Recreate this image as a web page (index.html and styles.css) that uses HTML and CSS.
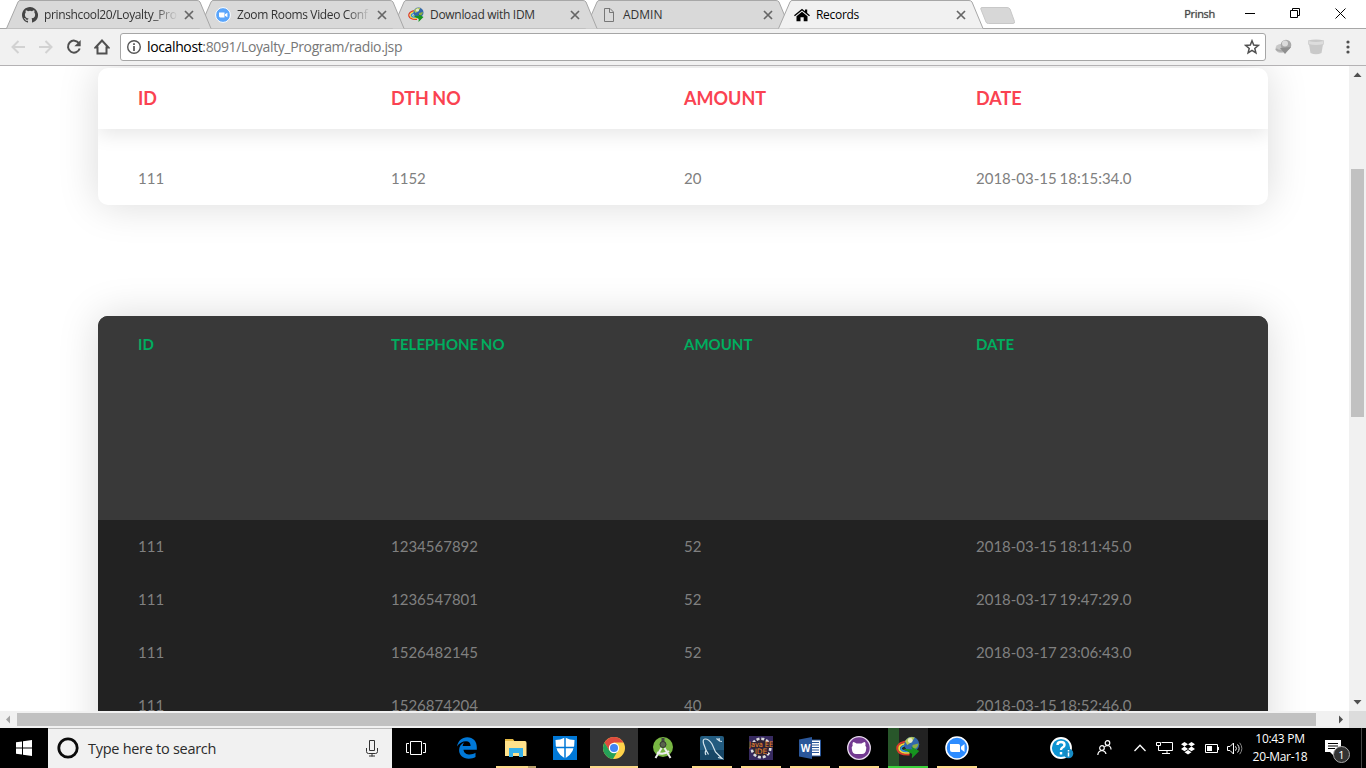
FILE: index.html
```
<!DOCTYPE html>
<html lang="en">
<head>
<meta charset="utf-8">
<title>Records</title>
<link rel="stylesheet" href="styles.css">
</head>
<body>
<div class="screen">
  <header class="tabstrip">
    <div class="tab z4">
      <svg class="shape" width="206" height="29"><path d="M.5 28.500 12 2Q12.800 .5 14 .5H191Q193 .5 194 2L205 28.500"/></svg>
      <svg class="fav" viewBox="0 0 16 16"><path fill="#444" d="M8 0C3.580 0 0 3.580 0 8c0 3.540 2.290 6.530 5.470 7.590.4.070.55-.17.55-.38v-1.490c-2.010.37-2.530-.49-2.690-.94-.09-.23-.48-.94-.82-1.130-.28-.15-.68-.52-.01-.53.63-.01 1.080.58 1.230.82.720 1.210 1.870.87 2.330.66.070-.52.280-.87.510-1.070-1.780-.2-3.640-.89-3.640-3.950 0-.87.310-1.590.82-2.150-.08-.2-.36-1.020.08-2.120 0 0 .67-.21 2.200.82a7.600 7.600 0 0 1 4 0c1.530-1.040 2.200-.82 2.200-.82.440 1.100.160 1.920.080 2.120.510.560.820 1.270.820 2.150 0 3.070-1.870 3.750-3.650 3.950.290.250.540.730.540 1.480v2.200c0 .210.150.460.550.380A8 8 0 0 0 8 0Z"/></svg>
      <span class="title fade">prinshcool20/Loyalty_Pro</span>
      <svg class="close" viewBox="0 0 10 10"><path d="M1 1l8 8M9 1L1 9"/></svg>
    </div>
    <div class="tab z3">
      <svg class="shape" width="206" height="29"><path d="M.5 28.500 12 2Q12.800 .5 14 .5H191Q193 .5 194 2L205 28.500"/></svg>
      <svg class="fav" viewBox="0 0 16 16"><circle cx="8" cy="8" r="7.400" fill="#5aa5fb" stroke="#fff"/><path fill="#fff" d="M4 5.500h5.500v5H5L4 9.500zM10 7.300l2.400-1.500v4.500L10 8.800z"/></svg>
      <span class="title fade">Zoom Rooms Video Conf</span>
      <svg class="close" viewBox="0 0 10 10"><path d="M1 1l8 8M9 1L1 9"/></svg>
    </div>
    <div class="tab z2">
      <svg class="shape" width="206" height="29"><path d="M.5 28.500 12 2Q12.800 .5 14 .5H191Q193 .5 194 2L205 28.500"/></svg>
      <svg class="fav" viewBox="0 0 16 16"><use href="#idm"/></svg>
      <span class="title">Download with IDM</span>
      <svg class="close" viewBox="0 0 10 10"><path d="M1 1l8 8M9 1L1 9"/></svg>
    </div>
    <div class="tab z1">
      <svg class="shape" width="206" height="29"><path d="M.5 28.500 12 2Q12.800 .5 14 .5H191Q193 .5 194 2L205 28.500"/></svg>
      <svg class="fav" viewBox="0 0 16 16"><path d="M3.500 1.500H9L12.500 5v9.500h-9zM8.500 1.500v4h4" fill="none" stroke="#777"/></svg>
      <span class="title plain">ADMIN</span>
      <svg class="close" viewBox="0 0 10 10"><path d="M1 1l8 8M9 1L1 9"/></svg>
    </div>
    <div class="tab active">
      <svg class="shape" width="206" height="29"><path d="M.5 28.500 12 2Q12.800 .5 14 .5H191Q193 .5 194 2L205 28.500"/></svg>
      <svg class="fav" viewBox="0 0 16 16"><path d="M0 8.300 8 1.700l3 2.500V2.500h2.200v3.400L16 8.300l-.9 1L8 3.500.9 9.300zM2.500 9.300 8 4.800l5.500 4.500v5H9.700v-4H6.500v4h-4z"/></svg>
      <span class="title">Records</span>
      <svg class="close" viewBox="0 0 10 10"><path d="M1 1l8 8M9 1L1 9"/></svg>
    </div>
    <svg class="newtab" width="36" height="18" viewBox="0 0 36 18"><path d="M2 .5H27Q29 .5 30 2L34.500 14.500Q35 16.500 33 16.500H8.500Q6.500 16.500 6 15L.8 2Q.5 .5 2 .5z" fill="#d7d7d7" stroke="#c8c8c8"/></svg>
    <div class="window-controls">
      <span class="user">Prinsh</span>
      <svg width="10" height="10"><path d="M0 5.500h10" stroke="#000"/></svg>
      <svg width="10" height="10"><path d="M.5 2.500h7v7h-7zM2.500 2.500v-2h7v7h-2" fill="none" stroke="#000"/></svg>
      <svg width="11" height="11"><path d="M.5.5l10 10M10.500.5l-10 10" stroke="#000"/></svg>
    </div>
  </header>

  <div class="toolbar">
    <svg class="nav" viewBox="0 0 16 16"><path d="M15 8H3M8.500 2 2.500 8l6 6" stroke="#d2d2d2" stroke-width="2" fill="none"/></svg>
    <svg class="nav" viewBox="0 0 16 16"><path d="M1 8h12M7.500 2l6 6-6 6" stroke="#d2d2d2" stroke-width="2" fill="none"/></svg>
    <svg class="nav" viewBox="0 0 16 16"><path d="M13 4.300A6 6 0 1 0 13.700 9.500" stroke="#505050" stroke-width="2" fill="none"/><path d="M14.700 1v6.300H8.400z" fill="#505050"/></svg>
    <svg class="nav" viewBox="0 0 16 16"><path d="M1.500 8.500 8 1.500l6.500 7H12.500v6h-9v-6z" stroke="#505050" stroke-width="2" fill="none"/></svg>
    <div class="omnibox">
      <svg width="16" height="16" viewBox="0 0 16 16"><circle cx="8" cy="8" r="6.300" fill="none" stroke="#555" stroke-width="1.400"/><path d="M8 4.200v1.700M8 7v5" stroke="#555" stroke-width="1.700"/></svg>
      <span class="url"><b>localhost</b>:8091/Loyalty_Program/radio.jsp</span>
      <svg class="star" width="16" height="16" viewBox="0 0 16 16"><path d="M8 1.800l1.700 4.300 4.600.3-3.500 3 1.100 4.400L8 11.400l-3.900 2.400 1.100-4.400-3.500-3 4.600-.3z" fill="none" stroke="#505050" stroke-width="1.500"/></svg>
    </div>
    <svg class="ext1" width="18" height="16" viewBox="0 0 18 16"><ellipse cx="6" cy="9.500" rx="5.500" ry="4.500" fill="#c8c8c8"/><path d="M1 10q3 3 8 1" stroke="#aaa" stroke-width="2" fill="none"/><circle cx="11" cy="6" r="5.300" fill="#a9a9a9"/><circle cx="10" cy="4.500" r="3" fill="#dcdcdc"/><path d="M5 9l11-1-6 7z" fill="#8f8f8f"/></svg>
    <svg class="ext2" width="16" height="16" viewBox="0 0 16 16"><path d="M0 1.500q8-2 16 0v4h-1L13.500 14Q8 16.500 2.500 14L1 5.500H0z" fill="#c9c9c9"/><path d="M.5 2q7.500 2 15 0v3q-7.500 2-15 0z" fill="#ddd"/></svg>
    <svg class="dots" width="4" height="14"><g fill="#505050"><circle cx="2" cy="2" r="1.600"/><circle cx="2" cy="7" r="1.600"/><circle cx="2" cy="12" r="1.600"/></g></svg>
  </div>

  <div class="viewport">
    <main class="page">
      <section class="table light">
        <div class="row head"><span>ID</span><span>DTH NO</span><span>AMOUNT</span><span>DATE</span></div>
        <div class="body">
          <div class="row"><span>111</span><span>1152</span><span>20</span><span>2018-03-15 18:15:34.0</span></div>
        </div>
      </section>
      <section class="table dark">
        <div class="row head"><span>ID</span><span>TELEPHONE NO</span><span>AMOUNT</span><span>DATE</span></div>
        <div class="body">
          <div class="row"><span>111</span><span>1234567892</span><span>52</span><span>2018-03-15 18:11:45.0</span></div>
          <div class="row"><span>111</span><span>1236547801</span><span>52</span><span>2018-03-17 19:47:29.0</span></div>
          <div class="row"><span>111</span><span>1526482145</span><span>52</span><span>2018-03-17 23:06:43.0</span></div>
          <div class="row"><span>111</span><span>1526874204</span><span>40</span><span>2018-03-15 18:52:46.0</span></div>
        </div>
      </section>
    </main>
    <div class="vscroll">
      <svg width="17" height="17"><path d="M4.500 11 8.500 6.500 12.500 11z" fill="#505050"/></svg>
      <div class="vthumb"></div>
      <svg class="down" width="17" height="17"><path d="M4.500 6 8.500 10.500 12.500 6z" fill="#505050"/></svg>
    </div>
  </div>
  <div class="hscroll">
    <svg width="17" height="17"><path d="M10 4.500 6 8.500 10 12.500z" fill="#a3a3a3"/></svg>
    <div class="hthumb"></div>
    <svg class="right" width="17" height="17"><path d="M7 4.500 11 8.500 7 12.500z" fill="#505050"/></svg>
    <div class="corner"></div>
  </div>

  <footer class="taskbar">
    <div class="start"><svg width="16" height="16" viewBox="0 0 16 16"><path fill="#fff" d="M0 2.300 6 1.400v6.100H0zM7 1.200 16 0v7.500H7zM0 8.500h6v6.100l-6-.9zM7 8.500h9V16l-9-1.200z"/></svg></div>
    <div class="search">
      <svg width="22" height="22" viewBox="0 0 22 22"><circle cx="11" cy="11" r="9.200" fill="none" stroke="#0b0b0b" stroke-width="2.800"/></svg>
      <span>Type here to search</span>
      <svg class="mic" width="12" height="17" viewBox="0 0 12 17"><path d="M3.500.5h5v10h-5zM.5 8v3.500q0 2 2 2h7q2 0 2-2V8M6 13.500v3M3 16h6" fill="none" stroke="#333"/></svg>
    </div>
    <div class="apps">
      <div class="app taskview"><svg width="20" height="14" viewBox="0 0 20 14"><path d="M4.500.5h11v13h-11zM3 2.500H.5v9H3M17 2.500h2.500v9H17" fill="none" stroke="#fff"/></svg></div>
      <div class="app"><svg width="22" height="22" viewBox="0 0 22 22"><path fill="#0078d7" d="M1 9.500C2 4 6 .3 11.200.3c6 0 9.600 4.200 9.600 10v2.400H7.500c.2 3.200 3 4.800 6.200 4.800 2.200 0 4.200-.7 5.800-1.700v4.300c-1.800 1-4 1.600-6.700 1.600-6 0-9.700-3.300-9.700-8.600 0-3.500 1.900-6.300 5.200-7.900-1 1.100-1.500 2.300-1.700 3.700h8c0-2.800-1.600-4.600-4.500-4.600C6.500 4.300 3 6.300 1 9.500z"/></svg></div>
      <div class="app open double"><svg width="22" height="20" viewBox="0 0 22 20"><path fill="#e5b944" d="M0 1h8l2 3H0z"/><path fill="#ffe28b" d="M0 3h20q1.500 0 1.500 2v13H0z"/><path fill="#35b1ea" d="M4 10h14v9h-4v-4H8v4H4z"/></svg></div>
      <div class="app"><svg width="24" height="24" viewBox="0 0 24 24"><path fill="#0078d7" d="M0 0h24v24H0z"/><path fill="#fff" d="M12 1.500Q7 4 2.500 4q-.7 13 9.500 18.500Q22.200 17 21.500 4 17 4 12 1.500z"/><path d="M12 1v22M2 11.500h20" stroke="#0078d7" stroke-width="1.500"/></svg></div>
      <div class="app open chrome"><svg width="24" height="24" viewBox="0 0 24 24"><circle cx="12" cy="12" r="11" fill="#ffd24a"/><path fill="#de4b3e" d="M2.500 6.500A11 11 0 0 1 21.500 6.500H12l-5.500 7z"/><path fill="#25a058" d="M2.500 6.500A11 11 0 0 0 11 23l5-8.500-5 2-4-2.500z"/><circle cx="12" cy="12" r="5.200" fill="#fff"/><circle cx="12" cy="12" r="4" fill="#4285f4"/></svg></div>
      <div class="app"><svg width="22" height="24" viewBox="0 0 22 24"><circle cx="11" cy="11" r="10" fill="#78b643"/><path d="M11 2v5" stroke="#444" stroke-width="3"/><circle cx="11" cy="8.500" r="3" fill="#59634d" stroke="#333"/><path d="M9.500 12 3.500 22M12.500 12l6 10M5 16.500q6.500 3 12-1.500" stroke="#eee" stroke-width="2" fill="none"/></svg></div>
      <div class="app open"><svg width="24" height="24" viewBox="0 0 24 24"><rect width="24" height="24" rx="2" fill="#235c80"/><path d="M0 14h24v10H0z" fill="#174666"/><path d="M6 19q-1.500-2 0-5L3.500 7.500Q2.500 3 5 3q4 0 7 5l3.500 8 6.500 6.500-4-1M6 14l2.500 4.500M16.500 2.500l3 2.500 2.500.5M19.500 5l-.5-3" fill="none" stroke="#d5e5ee" stroke-width="1.200"/></svg></div>
      <div class="app open"><svg width="24" height="24" viewBox="0 0 24 24"><path fill="#372a60" d="M0 0h24v24H0z"/><circle cx="12" cy="12" r="9.300" fill="#302438" stroke="#ddd" stroke-width="2.600" stroke-dasharray="3 1.870"/><path d="M0 6h24v6h-5v6H6v-6H0z" fill="#2d2235"/><text x="0" y="11" class="eclipse" textLength="24" lengthAdjust="spacingAndGlyphs">Java EE</text><text x="12" y="18" text-anchor="middle" class="eclipse">IDE</text></svg></div>
      <div class="app open"><svg width="22" height="22" viewBox="0 0 22 22"><path d="M10 3h11.500v16H10z" fill="#fff" stroke="#2b579a"/><path d="M12 5.500h8M12 8h8M12 10.500h8M12 13h8M12 15.500h8" stroke="#2b579a"/><path fill="#2b579a" d="M0 2.500 13 0v22L0 19.500z"/><text x="6.500" y="15" text-anchor="middle" class="word">W</text></svg></div>
      <div class="app open"><svg width="24" height="24" viewBox="0 0 24 24"><circle cx="12" cy="12" r="11.300" fill="#733a91" stroke="#e9dcef" stroke-width="1.300"/><path fill="#fff" d="M6 6q2 0 3.500 1.500h5Q16 6 18 6q1 2 .3 3.500Q20 11 19 14q-.5 4-4 4H9q-3.500 0-4-4-1-3 .7-4.500Q5 8 6 6z"/></svg></div>
      <div class="app open idmapp"><svg width="24" height="24" viewBox="0 0 16 16"><g id="idm"><path d="M8 3.500Q-.3 4.500 1 9.300q1.200 3.400 8 3" fill="none" stroke="#dd3b2b" stroke-width="1.300"/><path d="M8 4.700Q1.300 5.500 2.200 9q1.200 2.500 6.800 2.300" fill="none" stroke="#f2d73c" stroke-width="1.200"/><path d="M8 5.900Q2.900 6.500 3.400 8.800 4.500 10.500 9 10.200" fill="none" stroke="#2b8fd3" stroke-width="1.200"/><circle cx="10.500" cy="5.500" r="5" fill="#3267ad"/><path d="M6 3.500Q8.500-.3 12.500 1l-2 3-3 2z" fill="#b5c852"/><path d="M11 6l4-1q-.5 3.500-4 4z" fill="#8cad45"/><circle cx="9.500" cy="3" r="1.600" fill="#f2f5e9" opacity=".8"/><path d="M4.500 8.500 11 9l-1-2 5.500 3-5 5 .3-3z" fill="#16941f"/></g></svg></div>
      <div class="app open"><svg width="24" height="24" viewBox="0 0 24 24"><circle cx="12" cy="12" r="11" fill="#2d8cff" stroke="#fff" stroke-width="1.500"/><path fill="#fff" d="M5 8h8.500q1.500 0 1.500 1.500V16H7q-2 0-2-2zM16 10.800 19.500 8v8L16 13.300z"/></svg></div>
    </div>
    <div class="tray">
      <svg class="help" width="24" height="22" viewBox="0 0 24 22"><circle cx="11" cy="11" r="10" fill="#0d94d2" stroke="#fff" stroke-width="1.800"/><path d="M7.500 8Q7.500 5 11 5t3.500 3Q14.500 9.500 12.500 10.500 11 11.300 11 13M11 15v2.500" fill="none" stroke="#fff" stroke-width="2.400"/><circle cx="18.500" cy="16.500" r="4.800" fill="#168bc4"/><path d="M18.500 13v1.500M18.500 15.500v4" stroke="#fff" stroke-width="1.500"/></svg>
      <svg class="people" width="15" height="16" viewBox="0 0 15 16"><g fill="none" stroke="#fff" stroke-width="1.200"><circle cx="5" cy="8" r="2.300"/><path d="M.8 15q.2-4 4.200-4.500Q8.500 11 9 14"/><circle cx="10.500" cy="3" r="2.300"/><path d="M7.500 7Q8.500 5.500 10.500 5.500q3.500.5 3.500 4"/></g></svg>
      <svg class="chev" width="12" height="8" viewBox="0 0 12 8"><path d="M.5 7 6 1.300 11.500 7" fill="none" stroke="#fff" stroke-width="1.300"/></svg>
      <svg class="net" width="17" height="14" viewBox="0 0 17 14"><path d="M5.500 1.500h11v8h-11M2.500 6v3.500H6M11 9.500v3M6 12.500h8M.5 1.500h4v3h-4zM2.500 4v3" fill="none" stroke="#fff"/></svg>
      <svg class="drop" width="14" height="13" viewBox="0 0 14 13"><path fill="#fff" d="M0 2.300 3.500 0 7 2.300 3.500 4.600zM7 2.300 10.500 0 14 2.300l-3.500 2.300zM0 6.900l3.500-2.300L7 6.900 3.500 9.200zM7 6.900l3.500-2.300L14 6.900l-3.500 2.300zM3.500 10.200 7 8l3.500 2.200L7 12.500z"/></svg>
      <svg class="bat" width="15" height="9"><path d="M.5.500h12v8H.5zM13.500 3v3" fill="none" stroke="#fff"/><path d="M2 2h5v5H2z" fill="#fff"/></svg>
      <svg class="vol" width="16" height="13" viewBox="0 0 16 13"><path d="M.5 4.500H3L6.500 1v11L3 8.500H.5zM8.500 4.300q1.800 2.200 0 4.400M10.500 2.500q3.300 4 0 8" fill="none" stroke="#fff"/><path d="M12.700.8q4.300 5.700 0 11.400" fill="none" stroke="#888"/></svg>
      <div class="clock"><span>10:43 PM</span><span class="date">20-Mar-18</span></div>
      <div class="notice"><svg width="16" height="16" viewBox="0 0 16 16"><path fill="#fff" d="M0 0h16v12H9v4l-4-4H0z"/><path d="M3 3.500h10M3 6h10M3 8.500h7" stroke="#000"/></svg><span class="badge">1</span></div>
    </div>
  </footer>
</div>
</body>
</html>
```
FILE: styles.css
```
* { box-sizing: border-box; }
body { margin: 0; overflow: hidden; background: #fff; font-family: "Open Sans", "Noto Sans", sans-serif; }
svg { display: block; flex: none; }
.screen { display: flex; flex-direction: column; width: 1366px; height: 768px; overflow: hidden; }

.tabstrip { display: flex; flex: none; height: 29px; padding-left: 6px; border-bottom: 1px solid #a7a7a7; }
.tab { position: relative; display: flex; align-items: center; flex: none; width: 193px; height: 29px; padding-left: 16px; }
.z4 { z-index: 4; } .z3 { z-index: 3; } .z2 { z-index: 2; } .z1 { z-index: 1; }
.active { z-index: 5; }
.shape { position: absolute; left: 0; top: 0; z-index: -1; fill: #d9d9d9; stroke: #a7a7a7; overflow: visible; }
.active .shape { fill: #f1f1f1; }
.fav { width: 16px; height: 16px; }
.title { width: 134px; margin-left: 6px; font-size: 12px; line-height: 16px; letter-spacing: -.3px; white-space: nowrap; color: #333; }
.plain { letter-spacing: 0; }
.active .title { color: #000; }
.fade { letter-spacing: -.36px; -webkit-mask-image: linear-gradient(90deg, #000 82%, transparent); mask-image: linear-gradient(90deg, #000 82%, transparent); }
.close { width: 10px; height: 10px; margin-left: 6px; fill: none; stroke: #666; stroke-width: 1.7; }
.newtab { margin: 7px 0 0 9px; }
.window-controls { display: flex; align-items: center; gap: 35px; height: 26px; margin: 0 20px 0 auto; }
.user { margin-right: -5px; font-size: 11px; letter-spacing: -.3px; color: #444; text-shadow: 0 0 1px #777; }

.toolbar { display: flex; align-items: center; flex: none; height: 37px; padding: 0 16px 0 10px; background: #f1f1f1; border-bottom: 1px solid #b4b2b4; }
.nav { width: 16px; height: 16px; margin-right: 12px; }
.nav + .nav + .nav + .nav { margin-right: 10px; }
.omnibox { display: flex; align-items: center; width: 1146px; height: 28px; padding: 0 5px; border: 1px solid #a6a6a6; border-radius: 3px; background: #fff; }
.url { margin-left: 5px; font-size: 14px; line-height: 20px; color: #777; letter-spacing: -.37px; }
.url b { font-weight: 400; color: #000; }
.star { margin-left: auto; }
.ext1 { margin-left: 9px; }
.ext2 { margin-left: 15px; }
.dots { margin-left: auto; }

.viewport { display: flex; flex: none; height: 645px; overflow: hidden; }
.page { width: 1349px; padding: 2px 81px 0 98px; background: #fff; overflow: hidden; }
.table { width: 1170px; border-radius: 10px; overflow: hidden; box-shadow: 0 0 40px rgba(0, 0, 0, .15); font-family: Lato, sans-serif; }
.row { display: grid; grid-template-columns: 253px 293px 292px 292px; padding-left: 40px; }
.light { height: 137px; background: #fff; }
.light .head { height: 61px; padding-top: 18px; font-size: 18px; line-height: 25px; font-weight: 700; word-spacing: -1px; color: #fa4251; box-shadow: 0 5px 20px rgba(0, 0, 0, .1); }
.light .body { padding-top: 23px; }
.body .row { height: 53px; padding-top: 16px; font-size: 15px; line-height: 21px; word-spacing: -1px; color: #808080; }
.dark { height: 700px; margin-top: 111px; background: #222; }
.dark .head { height: 204px; padding-top: 18px; font-size: 15px; line-height: 21px; font-weight: 700; word-spacing: -1px; color: #00ad5f; background: #393939; }
.vscroll { width: 17px; height: 645px; background: #f1f1f1; display: flex; flex-direction: column; }
.vthumb { width: 13px; height: 248px; margin: 86px 0 0 2px; background: #c1c1c1; }
.down { margin-top: auto; }
.hscroll { display: flex; flex: none; height: 17px; background: #f1f1f1; }
.hthumb { width: 1299px; height: 13px; margin-top: 2px; background: #c1c1c1; }
.right { margin-left: auto; }
.corner { width: 17px; background: #dcdcdc; }

.taskbar { display: flex; flex: none; height: 40px; background: #000; color: #fff; }
.start { display: flex; align-items: center; justify-content: center; width: 48px; }
.search { display: flex; align-items: center; width: 344px; padding: 0 14px 1px 9px; border-top: 1px solid #bbb; background: #f1f1f1; color: #2b2b2b; font-size: 14.500px; }
.search span { margin-left: 9px; letter-spacing: -.28px; }
.mic { margin-left: auto; }
.apps { display: flex; }
.app { display: flex; align-items: center; justify-content: center; width: 49px; height: 40px; }
.taskview { width: 50px; padding-right: 2px; }
.open { width: 40px; margin: 0 4.500px; border-bottom: 2px solid #fbd98a; padding-top: 2px; }
.double { border-image: linear-gradient(90deg, #fbd98a 78%, #b9a16b 78%) 2; }
.chrome { width: 48px; margin: 0 .5px; background: #343434; }
.idmapp { background: linear-gradient(90deg, #28562a 28%, #222 28%); border-color: #3bd13b; }
.eclipse { font: 7.500px "DejaVu Sans", sans-serif; fill: #f08a2a; }
.word { font: bold 10px "Open Sans", sans-serif; fill: #fff; }
.tray { display: flex; align-items: center; margin: 0 4px 0 auto; padding-right: 8px; border-right: 1px solid #444; }
.people { margin: 0 22px 0 23px; }
.chev { margin-right: 10px; }
.net { margin-right: 8px; }
.drop { margin-right: 10px; }
.bat { margin-right: 7px; }
.vol { margin-right: 7px; }
.clock { display: flex; flex-direction: column; align-items: center; width: 60px; font-size: 12px; line-height: 18px; letter-spacing: -.3px; white-space: nowrap; }
.notice { position: relative; width: 28px; height: 24px; margin-left: 15px; padding-top: 4px; }
.badge { position: absolute; left: 8px; top: 10px; width: 17px; height: 17px; border: 1px solid #aaa; border-radius: 50%; background: #333; font-size: 11px; line-height: 15px; text-align: center; }
```
